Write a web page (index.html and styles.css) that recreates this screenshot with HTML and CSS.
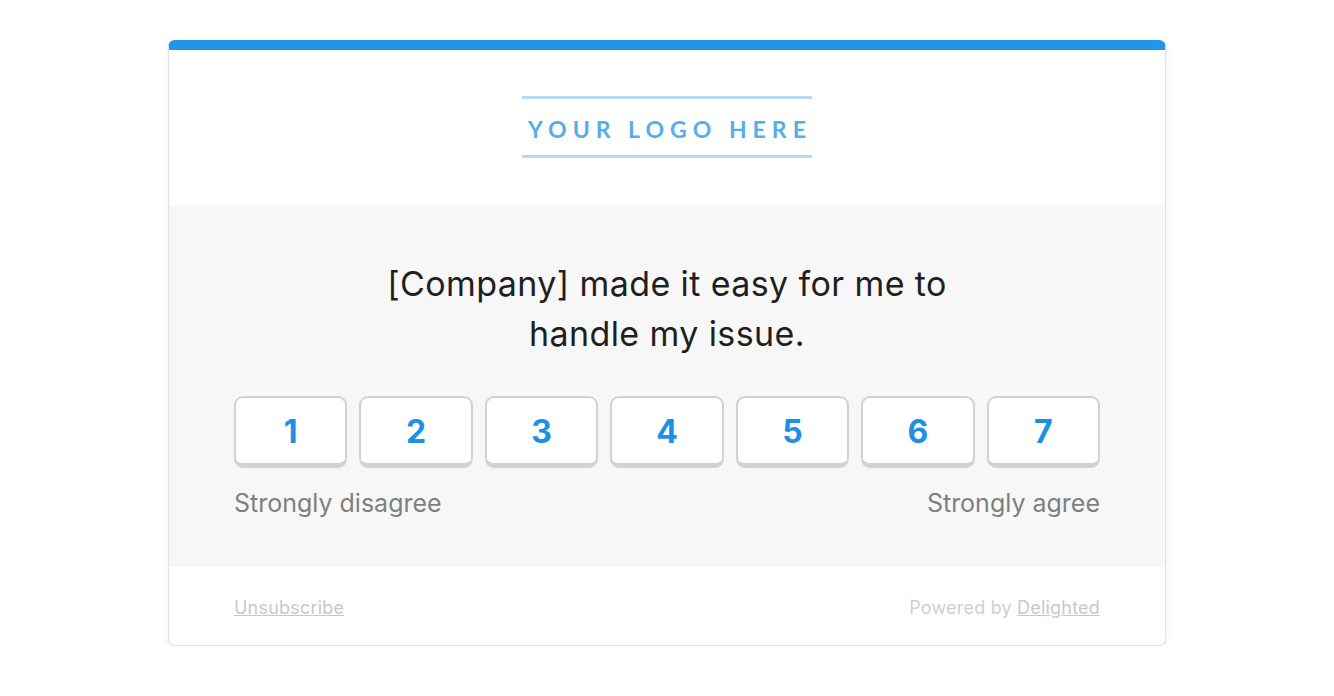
FILE: index.html
```html
<!DOCTYPE html>
<html>
<head>
    <meta charset="UTF-8">
    <title>Survey</title>
    <link rel="stylesheet" href="styles.css">
</head>
<body>
	<div class="card">
		<header class="brand">
			<div class="logo">YOUR LOGO HERE</div>
		</header>
		<section class="survey">
			<h1 class="question">[Company] made it easy for me to<br>handle my issue.</h1>
			<div class="scale">
				<a href="#" class="score">1</a>
				<a href="#" class="score">2</a>
				<a href="#" class="score">3</a>
				<a href="#" class="score">4</a>
				<a href="#" class="score">5</a>
				<a href="#" class="score">6</a>
				<a href="#" class="score">7</a>
			</div>
			<div class="legend">
				<span>Strongly disagree</span>
				<span>Strongly agree</span>
			</div>
		</section>
		<footer class="foot">
			<a href="#">Unsubscribe</a>
			<span>Powered by <a href="#">Delighted</a></span>
		</footer>
	</div>
</body>
</html>
```

FILE: styles.css
```css
body,h1{
	margin: 0;
}
body{
	background: #fff;
	font-family: Inter, Lato, sans-serif;
}
.card{
	width: 998px;
	margin: 40px auto 0;
	border: 1px solid #e2e2e2;
	border-top: 10px solid #2196e9;
	border-radius: 7px;
	box-sizing: border-box;
	overflow: hidden;
	box-shadow: 0 2px 6px rgba(0,0,0,0.07);
	background: #fff;
}
.brand{
	padding: 46px 0 47px;
	text-align: center;
}
.logo{
	display: inline-block;
	white-space: nowrap;
	border-top: 3px solid #b4dbf8;
	border-bottom: 3px solid #b4dbf8;
	padding: 17px 0 13px 6px;
	color: #57ade9;
	font-family: Lato, sans-serif;
	font-size: 23px;
	font-weight: 700;
	letter-spacing: 6px;
	line-height: 26px;
}
.survey{
	background: #f7f7f7;
	padding: 54px 65px 49px;
}
.question{
	font-size: 34px;
	font-weight: 400;
	letter-spacing: 0.4px;
	line-height: 50px;
	color: #1f1f1f;
	text-align: center;
	margin-bottom: 37px;
}
.scale{
	display: flex;
	gap: 12px;
}
.score{
	flex: 1;
	height: 72px;
	box-sizing: border-box;
	display: flex;
	align-items: center;
	justify-content: center;
	padding-top: 2px;
	background: #fff;
	border: 2px solid #d2d2d2;
	border-bottom-width: 5px;
	border-radius: 9px;
	color: #1e90e4;
	font-size: 32px;
	font-weight: 700;
	text-decoration: none;
}
.legend{
	display: flex;
	justify-content: space-between;
	margin-top: 20px;
	font-size: 25px;
	line-height: 30px;
	color: #7f7f7f;
}
.foot{
	display: flex;
	justify-content: space-between;
	padding: 30px 65px 26px;
	font-size: 18px;
	letter-spacing: 0.2px;
	line-height: 22px;
	color: #d0d0d0;
}
.foot a{
	color: #c8c8c8;
}
```
